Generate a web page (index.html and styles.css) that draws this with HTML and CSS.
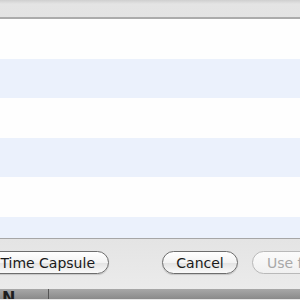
FILE: index.html
```html
<!DOCTYPE html>
<html lang="en">
<head>
    <meta charset="UTF-8">
    <title>Time Machine</title>
    <link rel="stylesheet" href="styles.css">
</head>
<body>
    <div class="sheet">
        <div class="header"></div>
        <div class="list">
            <div class="row"></div>
            <div class="row alt"></div>
            <div class="row"></div>
            <div class="row alt"></div>
            <div class="row"></div>
            <div class="row alt"></div>
        </div>
        <div class="footer">
            <button class="btn btn-setup">Time Capsule</button>
            <button class="btn btn-cancel">Cancel</button>
            <button class="btn btn-use" disabled>Use f</button>
        </div>
        <div class="behind">
            <span class="behind-label">N</span>
            <span class="behind-divider"></span>
        </div>
    </div>
</body>
</html>
```

FILE: styles.css
```css
body {
    margin: 0;
    font-family: "DejaVu Sans", "Liberation Sans", sans-serif;
}
.sheet {
    width: 300px;
    height: 300px;
    overflow: hidden;
    display: flex;
    flex-direction: column;
    background: #e8e8e8;
}
.header {
    height: 17px;
    flex: none;
    background: linear-gradient(#cfcfcf, #e4e4e4 4px, #e3e3e3);
    border-bottom: 2px solid #ababab;
}
.list {
    height: 219px;
    flex: none;
    overflow: hidden;
    background: #fff;
}
.row {
    height: 39.5px;
    background: #fefefe;
}
.row.alt {
    background: #ebf1fc;
}
.footer {
    height: 51px;
    flex: none;
    border-top: 1px solid #a6a6a6;
    background: linear-gradient(#e4e4e4, #ebebeb);
    display: flex;
    align-items: flex-start;
    padding-top: 12px;
    box-sizing: border-box;
    white-space: nowrap;
}
.btn {
    height: 23px;
    flex: none;
    border: 1px solid #6d6d6d;
    border-radius: 12px;
    background: linear-gradient(#ffffff, #f3f3f3 50%, #e2e2e2 51%, #fafafa);
    font-family: "DejaVu Sans", "Liberation Sans", sans-serif;
    font-size: 14px;
    color: #1a1a1a;
    padding: 0;
    box-shadow: 0 1px 1px rgba(0, 0, 0, 0.15);
}
.btn-setup {
    width: 130px;
    margin-left: -21px;
    text-align: right;
    padding-right: 13px;
}
.btn-cancel {
    width: 76px;
    margin-left: 53px;
}
.btn-use {
    width: 60px;
    margin-left: 14px;
    text-align: left;
    padding-left: 14px;
    border-color: #b9b9b9;
    color: #a8a8a8;
    box-shadow: none;
    background: linear-gradient(#fbfbfb, #f0f0f0);
}
.behind {
    height: 10px;
    flex: none;
    background: linear-gradient(#a8a8a8, #8a8a8a);
    position: relative;
    overflow: hidden;
}
.behind-label {
    position: absolute;
    left: 2px;
    top: 1px;
    font-size: 16px;
    line-height: 16px;
    font-weight: bold;
    color: #1e1e1e;
}
.behind-divider {
    position: absolute;
    left: 48px;
    top: 0;
    width: 1px;
    height: 10px;
    background: #555;
}
```
